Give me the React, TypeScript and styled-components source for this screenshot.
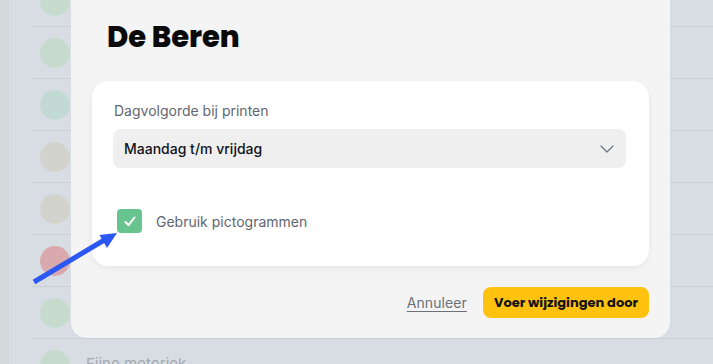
import * as React from 'react'
import styled, { createGlobalStyle } from 'styled-components'

const GlobalStyle = createGlobalStyle`
  html, body {
    margin: 0;
    padding: 0;
    width: 713px;
    height: 364px;
    overflow: hidden;
    background: #d8dde3;
    font-family: 'Inter', 'Liberation Sans', sans-serif;
  }
`

const Page = styled.div`
  position: relative;
  width: 713px;
  height: 364px;
  overflow: hidden;
  display: flex;
  background: #d8dde3;
`

const SideStrip = styled.div`
  width: 9px;
  flex-shrink: 0;
  background: #d3d8dd;
`

const List = styled.div`
  flex: 1;
  padding-left: 23px;
  margin-top: -25px;
  display: flex;
  flex-direction: column;
`

const Row = styled.div`
  height: 51px;
  flex-shrink: 0;
  display: flex;
  align-items: center;
  gap: 16px;
  padding-left: 8px;
  border-bottom: 1px solid #cbd0d6;
`

const Dot = styled.div<{ tone: string }>`
  width: 30px;
  height: 30px;
  border-radius: 50%;
  background: ${(p) => p.tone};
`

const RowLabel = styled.span`
  font-size: 15px;
  line-height: 18px;
  color: #a4a9b0;
  margin-top: -2px;
`

const Modal = styled.div`
  position: absolute;
  left: 71px;
  top: -24px;
  width: 599px;
  height: 362px;
  box-sizing: border-box;
  padding: 0 21px 20px 21px;
  background: #f4f4f4;
  border-radius: 16px;
  display: flex;
  flex-direction: column;
`

const Title = styled.h1`
  margin: 41px 0 24px 15px;
  font-family: 'Poppins', 'Inter', sans-serif;
  font-weight: 800;
  font-size: 29px;
  line-height: 40px;
  color: #0a0a0a;
  letter-spacing: 0;
`

const Card = styled.div`
  height: 185px;
  box-sizing: border-box;
  padding: 20px 23px 0 21px;
  background: #ffffff;
  border-radius: 16px;
  box-shadow: 0 2px 6px rgba(0, 0, 0, 0.06);
  display: flex;
  flex-direction: column;
`

const FieldLabel = styled.label`
  font-size: 14px;
  line-height: 20px;
  color: #5f6671;
  margin: 0 0 8px 1px;
`

const Select = styled.div`
  height: 39px;
  border-radius: 8px;
  background: #efefef;
  display: flex;
  align-items: center;
  justify-content: space-between;
  padding: 0 12px 0 11px;
  font-size: 14px;
  font-weight: 500;
  color: #111318;
`

const CheckRow = styled.div`
  margin: 41px 0 0 4px;
  display: flex;
  align-items: center;
  gap: 14px;
`

const CheckBox = styled.div`
  width: 25px;
  height: 24px;
  border-radius: 4px;
  background: #67c48f;
  display: flex;
  align-items: center;
  justify-content: center;
`

const CheckLabel = styled.span`
  font-size: 14px;
  color: #5f6671;
`

const Footer = styled.div`
  margin-top: auto;
  display: flex;
  justify-content: flex-end;
  align-items: center;
  gap: 16px;
  padding-right: 0;
`

const LinkButton = styled.button`
  background: none;
  border: none;
  padding: 0;
  font-family: 'Inter', 'Liberation Sans', sans-serif;
  font-size: 14px;
  letter-spacing: 0.1px;
  color: #6b7079;
  text-decoration: underline;
  text-underline-offset: 3px;
  cursor: pointer;
`

const PrimaryButton = styled.button`
  width: 166px;
  height: 31px;
  border: none;
  border-radius: 8px;
  background: #ffc20f;
  font-family: 'Poppins', 'Inter', sans-serif;
  font-weight: 700;
  font-size: 13px;
  color: #111111;
  cursor: pointer;
`

const Arrow = styled.svg`
  position: absolute;
  left: 0;
  top: 0;
  pointer-events: none;
`

const rows = [
  '#c6dace',
  '#c6dace',
  '#c3d9d3',
  '#d3d3ce',
  '#d3d3ce',
  '#d9a9ad',
  '#c6dace',
  '#c6dace',
]

export default function App() {
  return (
    <>
      <GlobalStyle />
      <Page>
        <SideStrip />
        <List>
          {rows.map((tone, i) => (
            <Row key={i}>
              <Dot tone={tone} />
              {i === rows.length - 1 && <RowLabel>Fijne motoriek</RowLabel>}
            </Row>
          ))}
        </List>

        <Modal>
          <Title>De Beren</Title>
          <Card>
            <FieldLabel>Dagvolgorde bij printen</FieldLabel>
            <Select>
              <span>Maandag t/m vrijdag</span>
              <svg width="14" height="8" viewBox="0 0 14 8" fill="none">
                <path d="M1 1l6 6 6-6" stroke="#6b7280" strokeWidth="1.2" strokeLinecap="round" strokeLinejoin="round" />
              </svg>
            </Select>
            <CheckRow>
              <CheckBox>
                <svg width="12" height="11" viewBox="0 0 12 11" fill="none">
                  <path d="M1.5 6l3 3.2L10.5 1.5" stroke="#ffffff" strokeWidth="2" strokeLinecap="round" strokeLinejoin="round" />
                </svg>
              </CheckBox>
              <CheckLabel>Gebruik pictogrammen</CheckLabel>
            </CheckRow>
          </Card>
          <Footer>
            <LinkButton>Annuleer</LinkButton>
            <PrimaryButton>Voer wijzigingen door</PrimaryButton>
          </Footer>
        </Modal>

        <Arrow width="713" height="364" viewBox="0 0 713 364">
          <line x1="34" y1="282" x2="106" y2="239" stroke="#2b58f2" strokeWidth="5" strokeLinecap="butt" />
          <polygon points="117,233 99.5,235 107,248" fill="#2b58f2" />
        </Arrow>
      </Page>
    </>
  )
}
